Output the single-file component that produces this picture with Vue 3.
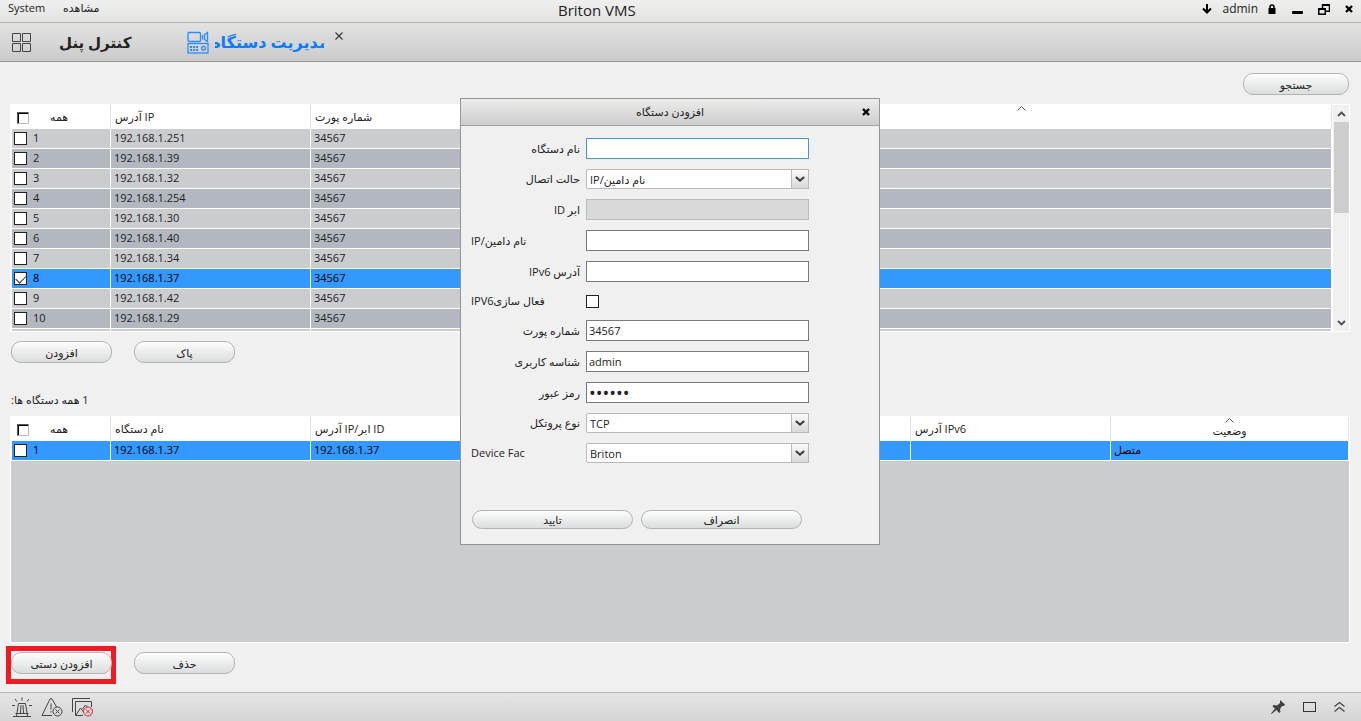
<script setup>
import { ref } from 'vue'

const found = ref([
  { ip: '192.168.1.251', port: '34567', checked: false },
  { ip: '192.168.1.39', port: '34567', checked: false },
  { ip: '192.168.1.32', port: '34567', checked: false },
  { ip: '192.168.1.254', port: '34567', checked: false },
  { ip: '192.168.1.30', port: '34567', checked: false },
  { ip: '192.168.1.40', port: '34567', checked: false },
  { ip: '192.168.1.34', port: '34567', checked: false },
  { ip: '192.168.1.37', port: '34567', checked: true },
  { ip: '192.168.1.42', port: '34567', checked: false },
  { ip: '192.168.1.29', port: '34567', checked: false },
])
const devices = ref([{ name: '192.168.1.37', address: '192.168.1.37', status: 'متصل', checked: false }])

const fields = ref([
  { id: 'name', label: 'نام دستگاه', kind: 'text', value: '', active: true },
  { id: 'mode', label: 'حالت اتصال', kind: 'select', value: 'IP/نام دامین' },
  { id: 'cloud', label: 'ID ابر', kind: 'text', value: '', disabled: true },
  { id: 'domain', label: 'IP/نام دامین', kind: 'text', value: '', start: true },
  { id: 'ipv6', label: 'IPv6 آدرس', kind: 'text', value: '' },
  { id: 'useIpv6', label: 'IPV6فعال سازی', kind: 'checkbox', value: false, start: true },
  { id: 'port', label: 'شماره پورت', kind: 'text', value: '34567' },
  { id: 'user', label: 'شناسه کاربری', kind: 'text', value: 'admin' },
  { id: 'password', label: 'رمز عبور', kind: 'password', value: 'abcdef' },
  { id: 'protocol', label: 'نوع پروتکل', kind: 'select', value: 'TCP' },
  { id: 'factory', label: 'Device Fac', kind: 'select', value: 'Briton', start: true },
])
</script>

<template>
  <div class="app">
    <header class="titlebar">
      <nav class="menu">
        <a href="#">System</a>
        <a href="#">مشاهده</a>
      </nav>
      <h1>Briton VMS</h1>
      <div class="session">
        <button class="icon" aria-label="Download">
          <svg width="10" height="10" viewBox="0 0 10 10"><path d="M5 0v8M1 4.5l4 4 4-4" fill="none" stroke="#000" stroke-width="2" /></svg>
        </button>
        <span class="user">admin</span>
        <button class="icon" aria-label="Lock">
          <svg width="8" height="10" viewBox="0 0 8 10"><path d="M2 5V3a2 2 0 0 1 4 0v2" fill="none" stroke="#000" stroke-width="1.5" /><rect x="0.5" y="4" width="7" height="6" /></svg>
        </button>
        <button class="icon minimise" aria-label="Minimise">
          <svg width="12" height="10" viewBox="0 0 12 10"><rect x="0" y="6" width="11" height="3" rx="1" /></svg>
        </button>
        <button class="icon restore" aria-label="Restore">
          <svg width="12" height="11" viewBox="0 0 12 11"><path d="M4.500 4V1h7v6.200H8" fill="none" stroke="#000" stroke-width="1.500" /><rect x="0.8" y="4.800" width="6.400" height="5.400" fill="none" stroke="#000" stroke-width="1.500" /><path d="M0 4h8v2H0zM4 0h8v2H4z" /></svg>
        </button>
        <button class="icon" aria-label="Close">
          <svg width="8" height="8" viewBox="0 0 8 8"><path d="M1 1l6 6M7 1L1 7" stroke="#000" stroke-width="2.4" /></svg>
        </button>
      </div>
    </header>

    <nav class="tabs">
      <button class="icon home" aria-label="Home">
        <svg width="19" height="19" viewBox="0 0 19 19" fill="none" stroke="#444"><path d="M.5.5h8v8h-8zM10.500 .5h8v8h-8zM.5 10.500h8v8h-8zM10.500 10.500h8v8h-8z" /></svg>
      </button>
      <a href="#" class="tab">کنترل پنل</a>
      <a href="#" class="tab active">
        <svg width="22" height="23" viewBox="0 0 22 23" fill="none" stroke="#2b8cff" stroke-width="1.300">
          <rect x="1" y="1.500" width="12.500" height="9" rx="1" />
          <path d="M15.500 4v4.500M17.500 3.500L20.500 1.500v9l-3-2z" />
          <rect x="1" y="12.500" width="20" height="9.500" />
          <circle cx="16.500" cy="17.300" r="1.900" />
          <path d="M3 16h9M3 19h9" stroke-width="2" stroke-dasharray="2 1" />
        </svg>
        <span>مدیریت دستگاه</span>
      </a>
      <button class="icon close-tab" aria-label="Close tab">
        <svg width="8" height="8" viewBox="0 0 8 8"><path d="M.5.5l7 7M7.500.5l-7 7" stroke="#333" stroke-width="1.1" /></svg>
      </button>
    </nav>

    <main>
      <div class="search"><button class="pill wide">جستجو</button></div>

      <section class="found">
        <div class="scrolled">
          <table>
            <colgroup><col class="c-first"><col class="c"><col class="c"><col class="c"><col></colgroup>
            <thead>
              <tr>
                <th><label class="all"><input type="checkbox"><span>همه</span></label></th>
                <th>آدرس IP</th>
                <th>شماره پورت</th>
                <th></th>
                <th class="sorted"><svg width="9" height="5" viewBox="0 0 9 5"><path d="M.5 4.500l4-4 4 4" fill="none" stroke="#555" /></svg></th>
              </tr>
            </thead>
            <tbody>
              <tr v-for="(d, i) in found" :key="d.ip" :class="{ selected: d.checked }">
                <td><label class="pick"><input v-model="d.checked" type="checkbox">{{ i + 1 }}</label></td>
                <td>{{ d.ip }}</td>
                <td>{{ d.port }}</td>
                <td></td>
                <td></td>
              </tr>
              <tr class="partial"><td></td><td></td><td></td><td></td><td></td></tr>
            </tbody>
          </table>
        </div>
        <div class="scrollbar">
          <button class="icon" aria-label="Scroll up"><svg width="9" height="6" viewBox="0 0 9 6"><path d="M1 5l3.500-3.500L8 5" fill="none" stroke="#505050" stroke-width="1.800" /></svg></button>
          <div class="thumb"></div>
          <button class="icon" aria-label="Scroll down"><svg width="9" height="6" viewBox="0 0 9 6"><path d="M1 1l3.500 3.500L8 1" fill="none" stroke="#505050" stroke-width="1.800" /></svg></button>
        </div>
      </section>

      <div class="actions">
        <button class="pill">افزودن</button>
        <button class="pill">پاک</button>
      </div>

      <p class="count"><span dir="rtl">1 همه دستگاه ها:</span></p>

      <section class="devices">
        <table>
          <colgroup><col class="c-first"><col class="c"><col class="c"><col class="c"><col class="c"><col class="c"><col></colgroup>
          <thead>
            <tr>
              <th><label class="all"><input type="checkbox"><span>همه</span></label></th>
              <th>نام دستگاه</th>
              <th>آدرس IP/ابر ID</th>
              <th></th>
              <th></th>
              <th>آدرس IPv6</th>
              <th class="sorted"><svg width="9" height="5" viewBox="0 0 9 5"><path d="M.5 4.500l4-4 4 4" fill="none" stroke="#555" /></svg>وضعیت</th>
            </tr>
          </thead>
          <tbody>
            <tr v-for="(d, i) in devices" :key="d.name" class="selected">
              <td><label class="pick"><input v-model="d.checked" type="checkbox">{{ i + 1 }}</label></td>
              <td>{{ d.name }}</td>
              <td>{{ d.address }}</td>
              <td></td>
              <td></td>
              <td></td>
              <td>{{ d.status }}</td>
            </tr>
          </tbody>
        </table>
      </section>

      <div class="actions bottom">
        <div class="marked"><button class="pill">افزودن دستی</button></div>
        <button class="pill">حذف</button>
      </div>
    </main>

    <footer class="statusbar">
      <div class="group">
        <button class="icon" aria-label="Alarms">
          <svg width="20" height="20" viewBox="0 0 20 20" fill="none" stroke="#444"><path d="M1 19.500h18M3.500 16.500h13M4.500 19l2-12.500h7l2 12.500M8.500 16l.5-8M11.500 16L11 8M10 .5v3M3 2l2 2.500M17 2l-2 2.500M0 8.500h3M17 8.500h3" /></svg>
        </button>
        <button class="icon" aria-label="Warnings">
          <svg width="22" height="20" viewBox="0 0 22 20" fill="none" stroke="#444"><path d="M11 18.500H1L9 2q1-1.500 2 0l4.500 8M10 6.500v6M10 14v1.500" /><circle cx="16.500" cy="14.500" r="4.500" /><path d="M14.500 12.500l4 4M18.500 12.500l-4 4" /></svg>
        </button>
        <button class="icon" aria-label="Pictures">
          <svg width="21" height="20" viewBox="0 0 21 20" fill="none" stroke="#444"><path d="M.5 15V1.500H18M11 18.500H3.500v-14h16V10M4 18l4.500-7 3 4M10.500 12l3-4 2 2" /><g stroke="#e0242c"><circle cx="16" cy="14.500" r="4.500" /><path d="M14 12.500l4 4M18 12.500l-4 4" /></g></svg>
        </button>
      </div>
      <div class="group right">
        <button class="icon" aria-label="Pin">
          <svg width="14" height="14" viewBox="0 0 14 14" fill="#404040"><path d="M9 0l5 4.500-1 1.500h-2L9 9l.5 3L8 13 5.500 10 .5 14 0 13.500 4 8.500 1.500 6.500 2.500 5l3.500.5L9 3z" /></svg>
        </button>
        <button class="icon" aria-label="Window">
          <svg width="13" height="10" viewBox="0 0 13 10"><rect x=".5" y=".5" width="12" height="9" fill="none" stroke="#333" /></svg>
        </button>
        <button class="icon" aria-label="Expand">
          <svg width="11" height="10" viewBox="0 0 11 10"><path d="M.5 4.500l5-4 5 4M.5 9.500l5-4 5 4" fill="none" stroke="#444" stroke-width="1.200" /></svg>
        </button>
      </div>
    </footer>

    <form class="dialog" role="dialog" aria-labelledby="dialog-title" @submit.prevent>
      <div class="dialog-head">
        <h2 id="dialog-title">افزودن دستگاه</h2>
        <button type="button" class="icon" aria-label="Close">
          <svg width="8" height="8" viewBox="0 0 8 8"><path d="M1 1l6 6M7 1L1 7" stroke="#000" stroke-width="2.400" /></svg>
        </button>
      </div>
      <div class="fields">
        <div v-for="f in fields" :key="f.id" class="field">
          <label :for="f.id" :class="{ start: f.start }">{{ f.label }}</label>
          <div v-if="f.kind === 'select'" class="select">
            <select :id="f.id" v-model="f.value"><option>{{ f.value }}</option></select>
            <span class="arrow"><svg width="10" height="6" viewBox="0 0 10 6"><path d="M.8 1L5 4.600 9.200 1" fill="none" stroke="#404244" stroke-width="2.200" /></svg></span>
          </div>
          <div v-else-if="f.kind === 'checkbox'" class="check"><input :id="f.id" v-model="f.value" type="checkbox"></div>
          <input v-else :id="f.id" v-model="f.value" class="box" :class="{ active: f.active }" :type="f.kind" :disabled="f.disabled">
        </div>
      </div>
      <div class="dialog-actions">
        <button class="pill low">تایید</button>
        <button type="button" class="pill low">انصراف</button>
      </div>
    </form>
  </div>
</template>

<style>
html, body, #app { height: 100%; }
body { margin: 0; background: #f0f0f0; }
</style>

<style scoped>
* { box-sizing: border-box; }
.app {
  position: relative;
  display: flex;
  flex-direction: column;
  min-height: 100%;
  font: 11px/16px "Open Sans", "DejaVu Sans", sans-serif;
  color: #222;
}
button, input, select { font: inherit; color: inherit; margin: 0; }
a { color: inherit; text-decoration: none; }
.icon { display: flex; padding: 0; border: 0; background: none; }
svg { display: block; flex: none; }

.titlebar {
  display: grid;
  grid-template-columns: 41% auto 1fr;
  height: 23px;
  border-bottom: 1px solid #b4b4b4;
  background: linear-gradient(#efefef, #e3e3e1);
}
.menu { display: flex; gap: 18px; padding-left: 8px; }
h1 { margin: 0; font-size: 15px; line-height: 20px; font-weight: 400; }
.session { display: flex; justify-content: flex-end; align-items: center; padding: 0 8px 4px 0; }
.user { margin: 0 10px 0 10px; font-size: 12px; }
.minimise { margin: 2px 14px 0 16px; }
.restore { margin-right: 15px; }

.tabs {
  display: flex;
  align-items: center;
  height: 39px;
  padding-left: 12px;
  border-bottom: 1px solid #989898;
  background: linear-gradient(#e2e2e2, #cbcbcb);
}
.tab { display: flex; align-items: center; margin-left: 28px; font-size: 15px; line-height: 24px; font-weight: 700; white-space: nowrap; }
.tab.active { gap: 6px; margin-left: 56px; font-size: 16px; color: #0a7cff; }
.tab.active span { width: 109px; overflow: hidden; display: flex; justify-content: center; }
.close-tab { align-self: flex-start; margin: 9px 0 0 11px; }

main { flex: 1; display: flex; flex-direction: column; padding: 11px 11px 8px 10px; }
.search { display: flex; justify-content: flex-end; padding-right: 1px; }
.pill {
  width: 101px;
  height: 22px;
  padding: 2px 0 0;
  border: 1px solid #b2b4b4;
  border-radius: 10px;
  background: linear-gradient(#fdfdfd, #dbdddd);
  line-height: 16px;
}
.pill.wide { width: 106px; }
.pill.low { width: 161px; height: 19px; padding-top: 0; }

.found { display: flex; margin-top: 9px; border: 1px solid #fff; background: #fff; }
.scrolled { flex: 1; padding-left: 1px; }
table { width: 100%; border-collapse: separate; border-spacing: 0; table-layout: fixed; }
.c-first { width: 99px; }
.c { width: 200px; }
th, td { padding: 0 0 0 3px; border-right: 1px solid #fff; text-align: left; font-weight: 400; white-space: nowrap; }
th { height: 24px; padding-left: 4px; border-right-color: #e0e0e0; background: #fff; }
th.sorted { padding: 0; text-align: center; vertical-align: top; }
th.sorted svg { margin: 1px auto 0; }
td { height: 20px; border-bottom: 1px solid #fff; line-height: 16px; padding-bottom: 1px; }
tbody tr { background: #cbccd0; }
tbody tr:nth-child(even) { background: #b3b8c0; }
tbody tr.selected { background: #3399ff; color: #000; }
.partial td { height: 2px; padding: 0; border-bottom: 0; }
th:first-child { padding-left: 5px; }
td:first-child { padding-left: 2px; }
.pick { display: flex; align-items: center; gap: 6px; }
.all { display: flex; align-items: center; gap: 21px; }
.all input { margin-top: 2px; }
input[type="checkbox"] { appearance: none; width: 13px; height: 13px; border: 1px solid #222; background: #fff; }
.pick input { position: relative; }
.pick input:checked::after {
  content: "";
  position: absolute;
  left: 1px;
  top: 2px;
  width: 9px;
  height: 5px;
  border: solid #333;
  border-width: 0 0 1px 1px;
  transform: rotate(-45deg);
}
.all input[type="checkbox"] { width: 12px; height: 12px; border: 1px solid; border-color: #555 #bbb #bbb #555; box-shadow: inset 1px 1px #000; }
.scrollbar { display: flex; flex-direction: column; align-items: center; width: 16px; margin-left: 1px; background: #f0f0f0; }
.scrollbar .icon { width: 16px; height: 17px; align-items: center; justify-content: center; }
.scrollbar .icon:last-child { margin-top: auto; }
.thumb { width: 15px; height: 91px; background: #cdcdcd; }

.actions { display: flex; gap: 22px; margin: 9px 0 0 1px; }
.count { display: flex; margin: 29px 0 8px 1px; }
.devices { flex: 1; border: 1px solid #fff; background: #cbccd0; padding: 0; }
.devices table { border-left: 1px solid #fff; }
.actions.bottom { margin-top: 9px; padding-bottom: 10px; }
.marked { margin: -6px -4px -10px -5px; padding: 6px 4px 10px 5px; box-shadow: inset 0 0 0 5px #ed1c24; position: relative; }

.statusbar {
  display: flex;
  justify-content: space-between;
  align-items: center;
  height: 29px;
  padding: 0 16px 0 12px;
  border-top: 1px solid #b4b4b4;
  background: linear-gradient(#e4e4e4, #d5d5d5);
}
.group { display: flex; align-items: center; gap: 9px; }
.group.right { gap: 18px; }

.dialog {
  position: absolute;
  left: 460px;
  top: 98px;
  width: 420px;
  border: 1px solid #95959a;
  background: #f0f0f0;
}
.dialog-head { display: flex; align-items: center; height: 27px; padding: 0 9px 0 17px; border-bottom: 1px solid #a0a0a0; background: linear-gradient(#ececeb, #cdcdcd); }
h2 { flex: 1; margin: 0; text-align: center; font-size: 11px; font-weight: 400; line-height: 16px; }
.fields { display: flex; flex-direction: column; gap: 10px; padding: 12px 70px 0 10px; }
.field { display: grid; grid-template-columns: 109px 1fr; gap: 6px; align-items: center; }
.field label { text-align: right; }
.field label.start { text-align: left; }
.box { width: 100%; height: 21px; padding: 0 2px; border: 1px solid #7a7a7a; border-radius: 0; background: #fff; outline: 0; }
.box.active { border-color: #3c96f0; }
.box:disabled { border-color: #bcbcbc; background: #d9d9d9; }
.box[type="password"] { font-size: 18px; }
.check { display: flex; align-items: center; height: 18px; }
.select { position: relative; height: 20px; }
select { appearance: none; display: block; width: 100%; height: 20px; padding: 1px 20px 0 3px; border: 1px solid #b9b9b9; border-radius: 2px; background: #fff; }
.arrow { position: absolute; inset: 0 0 0 auto; width: 18px; display: flex; align-items: center; justify-content: center; border: 1px solid #b9b9b9; background: linear-gradient(#fafafa, #d8dada); pointer-events: none; }
.dialog-actions { display: flex; gap: 8px; padding: 47px 0 15px 11px; }
</style>
